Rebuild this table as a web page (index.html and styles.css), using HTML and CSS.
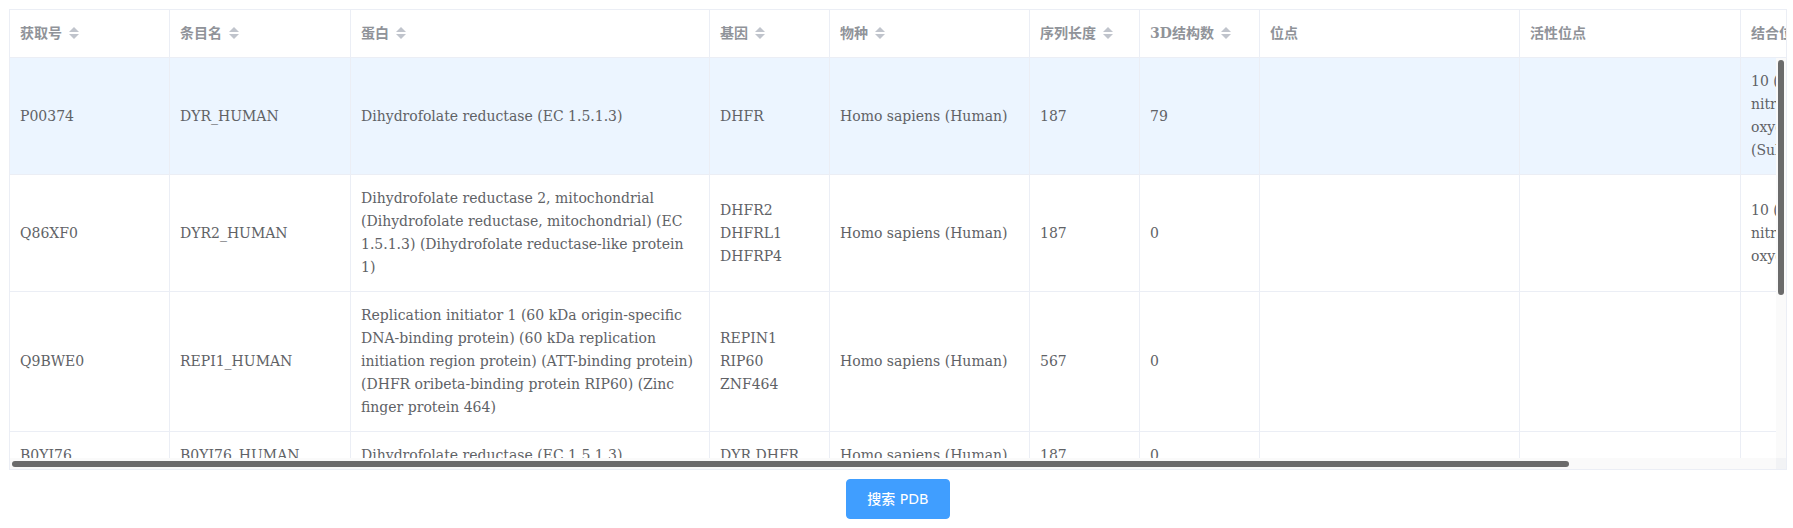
FILE: index.html
```html
<!DOCTYPE html>
<html lang="zh-CN">
<head>
<meta charset="utf-8">
<title>UniProt 结果</title>
<link rel="stylesheet" href="styles.css">
</head>
<body>
<div class="page">
  <div class="table">
    <div class="thead-wrap">
      <table class="grid">
        <colgroup>
          <col class="c1"><col class="c2"><col class="c3"><col class="c4"><col class="c5"><col class="c6"><col class="c7"><col class="c8"><col class="c9"><col class="c10">
        </colgroup>
        <thead>
          <tr>
            <th><div class="cell">获取号<span class="caret"><i class="up"></i><i class="down"></i></span></div></th>
            <th><div class="cell">条目名<span class="caret"><i class="up"></i><i class="down"></i></span></div></th>
            <th><div class="cell">蛋白<span class="caret"><i class="up"></i><i class="down"></i></span></div></th>
            <th><div class="cell">基因<span class="caret"><i class="up"></i><i class="down"></i></span></div></th>
            <th><div class="cell">物种<span class="caret"><i class="up"></i><i class="down"></i></span></div></th>
            <th><div class="cell">序列长度<span class="caret"><i class="up"></i><i class="down"></i></span></div></th>
            <th><div class="cell">3D结构数<span class="caret"><i class="up"></i><i class="down"></i></span></div></th>
            <th><div class="cell">位点</div></th>
            <th><div class="cell">活性位点</div></th>
            <th><div class="cell">结合位点</div></th>
          </tr>
        </thead>
      </table>
    </div>
    <div class="tbody-area">
      <div class="viewport">
        <table class="grid">
          <colgroup>
            <col class="c1"><col class="c2"><col class="c3"><col class="c4"><col class="c5"><col class="c6"><col class="c7"><col class="c8"><col class="c9"><col class="c10">
          </colgroup>
          <tbody>
            <tr class="current">
              <td><div class="cell">P00374</div></td>
              <td><div class="cell">DYR_HUMAN</div></td>
              <td><div class="cell">Dihydrofolate reductase (EC 1.5.1.3)</div></td>
              <td><div class="cell">DHFR</div></td>
              <td><div class="cell">Homo sapiens (Human)</div></td>
              <td><div class="cell">187</div></td>
              <td><div class="cell">79</div></td>
              <td><div class="cell"></div></td>
              <td><div class="cell"></div></td>
              <td><div class="cell">10 (NADP(+))<br>nitrogen ligand<br>oxygen ligand<br>(Substrate)</div></td>
            </tr>
            <tr>
              <td><div class="cell">Q86XF0</div></td>
              <td><div class="cell">DYR2_HUMAN</div></td>
              <td><div class="cell">Dihydrofolate reductase 2, mitochondrial (Dihydrofolate reductase, mitochondrial) (EC 1.5.1.3) (Dihydrofolate reductase-like protein 1)</div></td>
              <td><div class="cell">DHFR2<br>DHFRL1<br>DHFRP4</div></td>
              <td><div class="cell">Homo sapiens (Human)</div></td>
              <td><div class="cell">187</div></td>
              <td><div class="cell">0</div></td>
              <td><div class="cell"></div></td>
              <td><div class="cell"></div></td>
              <td><div class="cell">10 (NADP(+))<br>nitrogen ligand<br>oxygen ligand</div></td>
            </tr>
            <tr>
              <td><div class="cell">Q9BWE0</div></td>
              <td><div class="cell">REPI1_HUMAN</div></td>
              <td><div class="cell">Replication initiator 1 (60 kDa origin-specific DNA-binding protein) (60 kDa replication initiation region protein) (ATT-binding protein) (DHFR oribeta-binding protein RIP60) (Zinc finger protein 464)</div></td>
              <td><div class="cell">REPIN1<br>RIP60<br>ZNF464</div></td>
              <td><div class="cell">Homo sapiens (Human)</div></td>
              <td><div class="cell">567</div></td>
              <td><div class="cell">0</div></td>
              <td><div class="cell"></div></td>
              <td><div class="cell"></div></td>
              <td><div class="cell"></div></td>
            </tr>
            <tr>
              <td><div class="cell">B0YI76</div></td>
              <td><div class="cell">B0YI76_HUMAN</div></td>
              <td><div class="cell">Dihydrofolate reductase (EC 1.5.1.3)</div></td>
              <td><div class="cell">DYR DHFR</div></td>
              <td><div class="cell">Homo sapiens (Human)</div></td>
              <td><div class="cell">187</div></td>
              <td><div class="cell">0</div></td>
              <td><div class="cell"></div></td>
              <td><div class="cell"></div></td>
              <td><div class="cell"></div></td>
            </tr>
          </tbody>
        </table>
      </div>
      <div class="vbar"><div class="vthumb"></div></div>
      <div class="hbar"><div class="hthumb"></div></div>
      <div class="corner"></div>
    </div>
  </div>
  <div class="actions">
    <button class="btn" type="button">搜索 PDB</button>
  </div>
</div>
</body>
</html>
```

FILE: styles.css
```css
html, body {
  margin: 0;
  background: #ffffff;
}

.page {
  padding: 9px 6px 0 9px;
  font-family: "DejaVu Serif", "Noto Sans CJK SC", serif;
  font-size: 14px;
  color: #606266;
}

.table {
  border: 1px solid #EBEEF5;
  background: #ffffff;
}

.thead-wrap {
  overflow: hidden;
}

.tbody-area {
  display: grid;
  grid-template-columns: minmax(0, 1fr) 10px;
  grid-template-rows: 400px 11px;
}

.viewport {
  overflow: hidden;
  min-width: 0;
}

.vbar {
  background: #fafafa;
  padding: 2px;
}

.vthumb {
  width: 6px;
  height: 235px;
  background: #6b6b6b;
  border-radius: 3px;
}

.hbar {
  background: #fafafa;
  padding: 3px 2px 2px;
}

.hthumb {
  width: 1557px;
  height: 6px;
  background: #6b6b6b;
  border-radius: 3px;
}

.corner {
  background: #f2f3f5;
}

.grid {
  width: 2000px;
  table-layout: fixed;
  border-collapse: separate;
  border-spacing: 0;
}

.c1 { width: 160px; }
.c2 { width: 181px; }
.c3 { width: 359px; }
.c4 { width: 120px; }
.c5 { width: 200px; }
.c6 { width: 110px; }
.c7 { width: 120px; }
.c8 { width: 260px; }
.c9 { width: 221px; }
.c10 { width: 269px; }

.grid th,
.grid td {
  padding: 12px 0;
  border-right: 1px solid #EBEEF5;
  border-bottom: 1px solid #EBEEF5;
  text-align: left;
  vertical-align: middle;
  background: #ffffff;
}

.grid th {
  color: #909399;
  font-weight: bold;
}

.grid tr.current td {
  background: #ecf5ff;
}

.cell {
  padding: 0 10px;
  line-height: 23px;
  overflow: hidden;
  white-space: normal;
}

.caret {
  display: inline-flex;
  flex-direction: column;
  gap: 2px;
  margin-left: 7px;
  vertical-align: middle;
  position: relative;
  top: -1px;
}

.caret .up,
.caret .down {
  display: block;
  width: 0;
  height: 0;
  border-left: 5px solid transparent;
  border-right: 5px solid transparent;
}

.caret .up {
  border-bottom: 5px solid #C0C4CC;
}

.caret .down {
  border-top: 5px solid #C0C4CC;
}

.actions {
  display: flex;
  justify-content: center;
  margin-top: 9px;
}

.btn {
  font-family: "DejaVu Sans", "Noto Sans CJK SC", sans-serif;
  font-size: 14px;
  font-weight: 500;
  line-height: 1;
  color: #ffffff;
  background: #409EFF;
  border: 1px solid #409EFF;
  border-radius: 4px;
  padding: 12px 20px;
  cursor: pointer;
}
```
